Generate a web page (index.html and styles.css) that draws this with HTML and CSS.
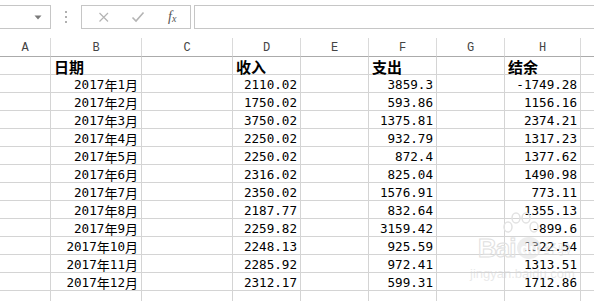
FILE: index.html
```html
<!DOCTYPE html>
<html lang="zh">
<head>
<meta charset="utf-8">
<link rel="stylesheet" href="styles.css">
</head>
<body>
<div class="toolbar">
  <div class="namebox">
    <svg class="caret" width="8" height="5" viewBox="0 0 8 5"><path d="M0.5 0.5 L7.5 0.5 L4 4.5 Z" fill="#7a7a7a"/></svg>
  </div>
  <div class="dots"><span></span><span></span><span></span></div>
  <div class="fbox">
    <svg class="ico" width="12" height="12" viewBox="0 0 12 12"><path d="M1.5 2 L10 10.5 M10 2 L1.5 10.5" stroke="#b4b4b4" stroke-width="1.2" fill="none"/></svg>
    <svg class="ico" width="14" height="12" viewBox="0 0 14 12"><path d="M1.5 6.5 L5 10 L12.5 1.5" stroke="#b4b4b4" stroke-width="1.6" fill="none"/></svg>
    <span class="fx">f<sub>x</sub></span>
  </div>
  <div class="finput"></div>
</div>
<div class="sheet">
  <div class="ch">A</div><div class="ch">B</div><div class="ch">C</div><div class="ch">D</div><div class="ch">E</div><div class="ch">F</div><div class="ch">G</div><div class="ch">H</div><div class="ch last"></div>

  <div class="c"></div><div class="c hd">日期</div><div class="c"></div><div class="c hd">收入</div><div class="c"></div><div class="c hd">支出</div><div class="c"></div><div class="c hd">结余</div><div class="c last"></div>

  <div class="c"></div><div class="c n">2017<span class="cj">年</span>1<span class="cj">月</span></div><div class="c"></div><div class="c n">2110.02</div><div class="c"></div><div class="c n">3859.3</div><div class="c"></div><div class="c n">-1749.28</div><div class="c last"></div>
  <div class="c"></div><div class="c n">2017<span class="cj">年</span>2<span class="cj">月</span></div><div class="c"></div><div class="c n">1750.02</div><div class="c"></div><div class="c n">593.86</div><div class="c"></div><div class="c n">1156.16</div><div class="c last"></div>
  <div class="c"></div><div class="c n">2017<span class="cj">年</span>3<span class="cj">月</span></div><div class="c"></div><div class="c n">3750.02</div><div class="c"></div><div class="c n">1375.81</div><div class="c"></div><div class="c n">2374.21</div><div class="c last"></div>
  <div class="c"></div><div class="c n">2017<span class="cj">年</span>4<span class="cj">月</span></div><div class="c"></div><div class="c n">2250.02</div><div class="c"></div><div class="c n">932.79</div><div class="c"></div><div class="c n">1317.23</div><div class="c last"></div>
  <div class="c"></div><div class="c n">2017<span class="cj">年</span>5<span class="cj">月</span></div><div class="c"></div><div class="c n">2250.02</div><div class="c"></div><div class="c n">872.4</div><div class="c"></div><div class="c n">1377.62</div><div class="c last"></div>
  <div class="c"></div><div class="c n">2017<span class="cj">年</span>6<span class="cj">月</span></div><div class="c"></div><div class="c n">2316.02</div><div class="c"></div><div class="c n">825.04</div><div class="c"></div><div class="c n">1490.98</div><div class="c last"></div>
  <div class="c"></div><div class="c n">2017<span class="cj">年</span>7<span class="cj">月</span></div><div class="c"></div><div class="c n">2350.02</div><div class="c"></div><div class="c n">1576.91</div><div class="c"></div><div class="c n">773.11</div><div class="c last"></div>
  <div class="c"></div><div class="c n">2017<span class="cj">年</span>8<span class="cj">月</span></div><div class="c"></div><div class="c n">2187.77</div><div class="c"></div><div class="c n">832.64</div><div class="c"></div><div class="c n">1355.13</div><div class="c last"></div>
  <div class="c"></div><div class="c n">2017<span class="cj">年</span>9<span class="cj">月</span></div><div class="c"></div><div class="c n">2259.82</div><div class="c"></div><div class="c n">3159.42</div><div class="c"></div><div class="c n">-899.6</div><div class="c last"></div>
  <div class="c"></div><div class="c n">2017<span class="cj">年</span>10<span class="cj">月</span></div><div class="c"></div><div class="c n">2248.13</div><div class="c"></div><div class="c n">925.59</div><div class="c"></div><div class="c n">1322.54</div><div class="c last"></div>
  <div class="c"></div><div class="c n">2017<span class="cj">年</span>11<span class="cj">月</span></div><div class="c"></div><div class="c n">2285.92</div><div class="c"></div><div class="c n">972.41</div><div class="c"></div><div class="c n">1313.51</div><div class="c last"></div>
  <div class="c"></div><div class="c n">2017<span class="cj">年</span>12<span class="cj">月</span></div><div class="c"></div><div class="c n">2312.17</div><div class="c"></div><div class="c n">599.31</div><div class="c"></div><div class="c n">1712.86</div><div class="c last"></div>
  <div class="c"></div><div class="c"></div><div class="c"></div><div class="c"></div><div class="c"></div><div class="c"></div><div class="c"></div><div class="c"></div><div class="c last"></div>
</div>
<div class="wm">
  <svg class="paw" width="40" height="26" viewBox="0 0 40 26">
    <g fill="none" stroke="#e2e2e2" stroke-width="1.5">
      <ellipse cx="8" cy="15" rx="4" ry="5"/>
      <ellipse cx="16" cy="6" rx="4" ry="5"/>
      <ellipse cx="26" cy="6" rx="4" ry="5"/>
      <ellipse cx="34" cy="15" rx="4" ry="5"/>
    </g>
  </svg>
  <div class="wm-main"><span class="bai">Bai</span><span class="du">du</span><span class="jy">经验</span></div>
  <div class="wm-url">jingyan.baidu.com</div>
</div>
</body>
</html>
```
FILE: styles.css
```css
html, body {
  margin: 0;
  padding: 0;
  background: #ffffff;
  overflow: hidden;
}
body {
  width: 594px;
  height: 301px;
  position: relative;
  font-family: "DejaVu Sans Mono", "Noto Sans CJK SC", monospace;
}
.toolbar {
  height: 38px;
  display: flex;
  align-items: flex-start;
  padding-top: 5px;
  box-sizing: border-box;
}
.namebox {
  width: 52px;
  height: 24px;
  margin-left: -1px;
  border: 1px solid #c6c6c6;
  box-sizing: border-box;
  display: flex;
  align-items: center;
  justify-content: flex-end;
  padding-right: 8px;
}
.caret { display: block; }
.dots {
  width: 30px;
  height: 24px;
  display: flex;
  flex-direction: column;
  align-items: center;
  justify-content: center;
  gap: 3px;
}
.dots span {
  width: 2px;
  height: 2px;
  background: #b0b0b0;
}
.fbox {
  width: 110px;
  height: 24px;
  border: 1px solid #c6c6c6;
  box-sizing: border-box;
  display: flex;
  align-items: center;
  padding-left: 16px;
  gap: 21px;
}
.ico { display: block; }
.fx {
  font-family: "Liberation Serif", serif;
  font-style: italic;
  font-size: 14px;
  color: #555;
  margin-left: 2px;
}
.fx sub { font-size: 10px; vertical-align: -1px; }
.finput {
  flex: 1;
  height: 24px;
  margin-left: 3px;
  border: 1px solid #c6c6c6;
  border-right: none;
  box-sizing: border-box;
}
.sheet {
  display: grid;
  grid-template-columns: 51px 91px 91px 68px 68px 68px 68px 76px 1fr;
  grid-template-rows: 19px repeat(14, 18px);
}
.ch {
  border-right: 1px solid #dadada;
  border-bottom: 1px solid #ababab;
  box-sizing: border-box;
  display: flex;
  align-items: center;
  justify-content: center;
  font-family: "Liberation Mono", monospace;
  font-size: 12px;
  color: #444;
  padding-top: 1px;
}
.c {
  border-right: 1px solid #d4d4d4;
  border-bottom: 1px solid #d4d4d4;
  box-sizing: border-box;
  display: flex;
  align-items: flex-end;
  font-size: 12.6px;
  line-height: 15px;
  color: #000;
  padding: 0 3px 0 3px;
  white-space: nowrap;
}
.cj {
  font-family: "Noto Sans CJK SC", sans-serif;
  font-size: 13px;
  line-height: 15px;
}
.last { border-right: none; }
.n { justify-content: flex-end; }
.hd {
  font-family: "Noto Sans CJK SC", sans-serif;
  font-weight: bold;
  font-size: 15px;
  line-height: 15px;
  padding-left: 3px;
}
.wm {
  position: absolute;
  left: 478px;
  top: 212px;
  width: 110px;
  pointer-events: none;
}
.paw { display: block; margin-left: 22px; }
.wm-main {
  display: flex;
  align-items: center;
  margin-top: -2px;
  height: 24px;
}
.bai {
  font-family: "Liberation Sans", sans-serif;
  font-weight: bold;
  font-size: 26px;
  color: transparent;
  -webkit-text-stroke: 1px #e0e0e0;
  letter-spacing: -1px;
}
.du {
  font-family: "Liberation Sans", sans-serif;
  font-weight: bold;
  font-size: 15px;
  color: #fff;
  background: rgba(220,220,220,0.5);
  border-radius: 50%;
  width: 24px;
  height: 22px;
  display: flex;
  align-items: center;
  justify-content: center;
  margin-left: 2px;
}
.jy {
  font-family: "Noto Sans CJK SC", sans-serif;
  font-size: 14px;
  color: rgba(205,205,205,0.5);
  margin-left: 2px;
}
.wm-url {
  font-family: "Liberation Sans", sans-serif;
  font-size: 13px;
  color: rgba(210,210,210,0.5);
  margin-top: 6px;
  margin-left: -8px;
}
```
